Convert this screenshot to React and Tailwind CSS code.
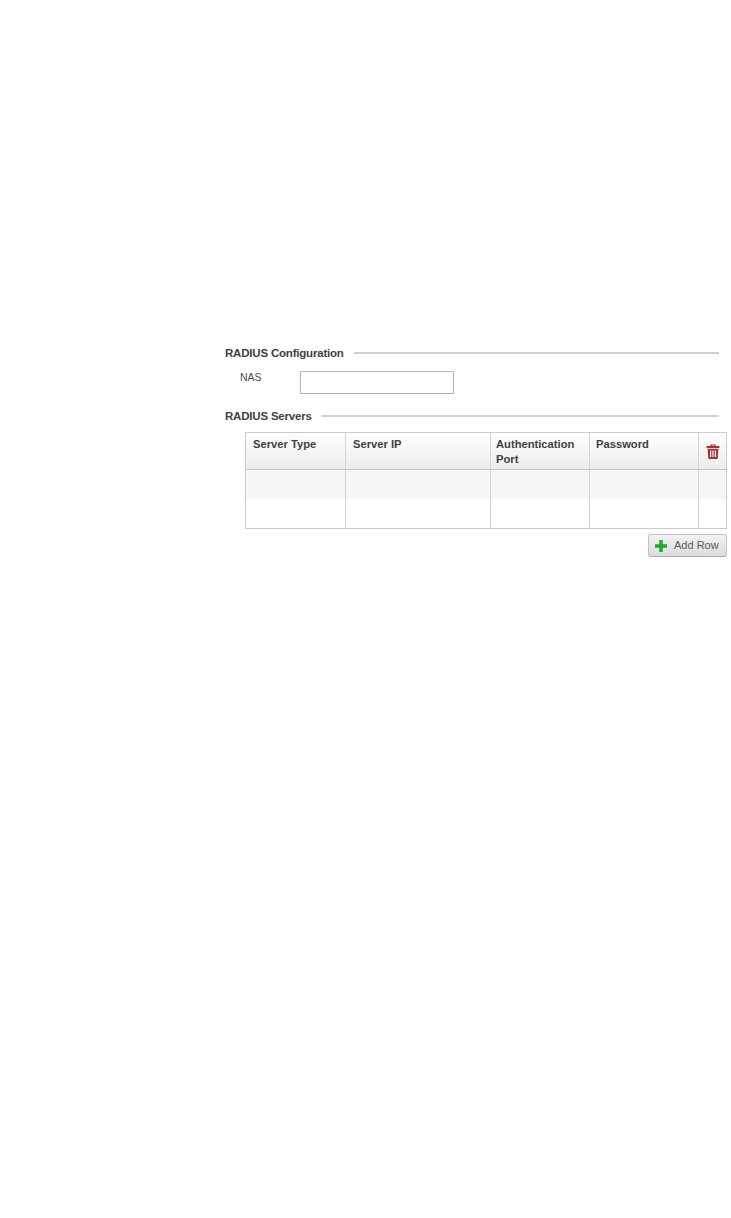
const columns = [
  { label: 'Server Type', width: 'w-[100px]', pad: 'pl-[7px] pr-[6px]' },
  { label: 'Server IP', width: 'w-[145px]', pad: 'pl-[7px] pr-[6px]' },
  { label: 'Authentication Port', width: 'w-[99px]', pad: 'pl-[5px] pr-[6px]' },
  { label: 'Password', width: 'w-[109px]', pad: 'pl-[6px] pr-[6px]' },
];

function SectionTitle({ children }) {
  return (
    <div className="flex items-center h-[16px]">
      <span className="text-[11.5px] leading-[16px] font-bold text-[#3f3f3f] tracking-[-0.2px]">{children}</span>
      <div className="flex-1 h-[2px] bg-[#cfcfcf] ml-[10px]" />
    </div>
  );
}

function Row({ shaded }) {
  return (
    <div className={`flex h-[29px] ${shaded ? 'bg-[#f6f6f6]' : 'bg-white'}`}>
      {columns.map((c) => (
        <div key={c.label} className={`${c.width} border-r border-[#d4d4d4]`} />
      ))}
      <div className="flex-1" />
    </div>
  );
}

function TrashIcon() {
  return (
    <svg width="14" height="15" viewBox="0 0 14 15">
      <path d="M5 2V1h4v1" fill="none" stroke="#a8323c" strokeWidth="1.2" />
      <rect x="0.5" y="2" width="13" height="2.2" rx="0.6" fill="#a8323c" />
      <path
        fillRule="evenodd"
        d="M1.6 5h10.8l-.6 9a1 1 0 0 1-1 1H3.2a1 1 0 0 1-1-1ZM4 6.5v6.5h1.2V6.5ZM6.4 6.5v6.5h1.2V6.5ZM8.8 6.5v6.5H10V6.5Z"
        fill="#a8323c"
      />
    </svg>
  );
}

function PlusIcon() {
  return (
    <svg width="12" height="12" viewBox="0 0 12 12">
      <path d="M4.3 0h3.4v4.3H12v3.4H7.7V12H4.3V7.7H0V4.3h4.3Z" fill="#1fa82f" />
    </svg>
  );
}

export default function App() {
  return (
    <div className="w-[731px] h-[1218px] bg-white pt-[345px] pl-[225px] pr-[4px] font-['Liberation_Sans',Arial,sans-serif]">
      <div className="pr-[8px]">
        <SectionTitle>RADIUS Configuration</SectionTitle>
      </div>
      <div className="flex mt-[10px] pl-[15px]">
        <label className="w-[60px] text-[10.5px] leading-[12px] text-[#4a4a4a]">NAS</label>
        <input className="w-[154px] h-[23px] border border-[#b4b4b4] bg-white" />
      </div>
      <div className="pr-[8px] mt-[14px]">
        <SectionTitle>RADIUS Servers</SectionTitle>
      </div>
      <div className="ml-[20px] mt-[8px] border border-[#cbcbcb]">
        <div className="flex h-[37px] border-b border-[#c4c4c4] bg-gradient-to-b from-white to-[#ececec]">
          {columns.map((c) => (
            <div
              key={c.label}
              className={`${c.width} ${c.pad} border-r border-[#d4d4d4] pt-[4px] text-[11.2px] leading-[15px] font-bold text-[#404040]`}
            >
              {c.label}
            </div>
          ))}
          <div className="flex-1 flex justify-center pt-[11px]">
            <TrashIcon />
          </div>
        </div>
        <Row shaded />
        <Row />
      </div>
      <div className="flex justify-end mt-[5px]">
        <button className="w-[79px] h-[23px] flex items-center rounded-[3px] border border-[#c4c4c4] border-b-[#aaa] bg-gradient-to-b from-[#f2f2f2] to-[#dcdcdc] pl-[6px] text-[11px] text-[#5a5a5a]">
          <PlusIcon />
          <span className="ml-[7px]">Add Row</span>
        </button>
      </div>
    </div>
  );
}
